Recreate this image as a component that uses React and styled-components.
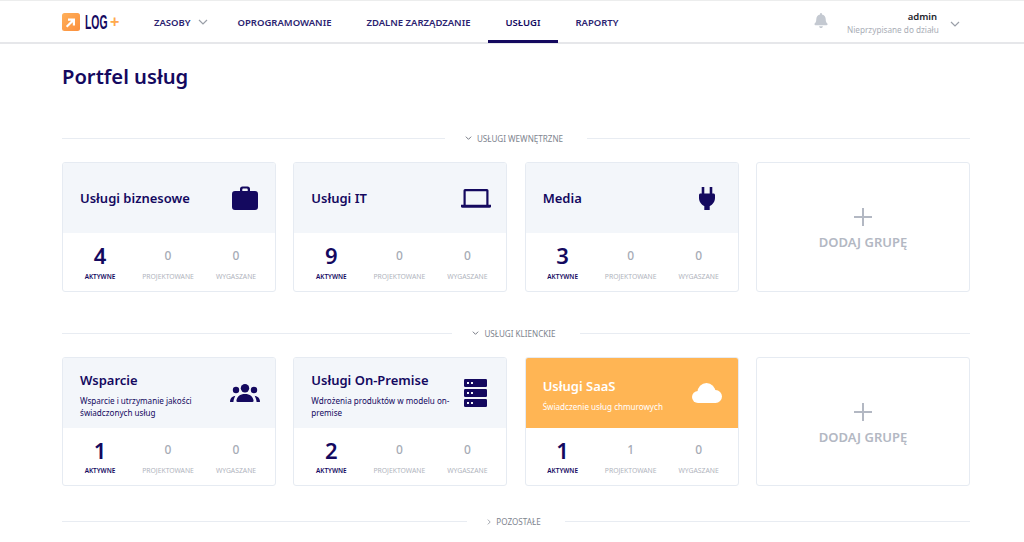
import React from "react";
import styled, { createGlobalStyle } from "styled-components";
import { FaBell } from "react-icons/fa";

const navy = "#14095f";
const font = `"Noto Sans", "Open Sans", "Liberation Sans", sans-serif`;

const Global = createGlobalStyle`
  html, body { margin: 0; padding: 0; background: #fff; height: 542px; overflow: hidden; }
  body { font-family: ${font}; color: ${navy}; }
  * { box-sizing: border-box; }
`;

const Header = styled.header`
  height: 44px;
  border-top: 1px solid #eceded;
  border-bottom: 2px solid #e6e7ea;
  display: flex;
  align-items: stretch;
  padding: 0 64px 0 62px;
`;
const Logo = styled.div`
  width: 92px;
  display: flex;
  align-items: center;
  flex: none;
`;
const LogoBadge = styled.svg`
  width: 18px;
  height: 18px;
  display: block;
  flex: none;
`;
const LogoText = styled.span`
  font-family: "Liberation Sans", sans-serif;
  font-weight: 700;
  font-size: 20px;
  line-height: 1;
  color: ${navy};
  display: inline-block;
  margin-left: 5px;
  width: 23px;
  transform: scaleX(0.52);
  transform-origin: left center;
  white-space: nowrap;
`;
const LogoPlus = styled.span`
  font-family: "Liberation Sans", sans-serif;
  font-weight: 700;
  font-size: 16px;
  line-height: 1;
  margin-left: 2px;
  color: #ffa94d;
`;
const Nav = styled.nav`
  display: flex;
  align-items: stretch;
  flex: 1;
`;
const NavItem = styled.a`
  display: flex;
  align-items: center;
  padding: 3px 17.5px 0;
  margin-bottom: -1px;
  font-size: 9.5px;
  font-weight: 600;
  color: ${p => (p.$active ? navy : "#2a2270")};
  border-bottom: 3px solid ${p => (p.$active ? navy : "transparent")};
  white-space: nowrap;
`;
const NavFirst = styled(NavItem)`
  padding-left: 0;
  padding-right: 29.5px;
  position: relative;
`;
const Chevron = styled.svg`
  width: ${p => p.$w || 10}px;
  height: ${p => p.$h || 6}px;
  flex: none;
  fill: none;
  stroke: ${p => p.$c || "#9a9fa8"};
  stroke-width: 1.2;
`;
const NavChevron = styled(Chevron)`
  position: absolute;
  right: 12px;
  top: 50%;
  margin-top: -2px;
`;
const UserArea = styled.div`
  display: flex;
  align-items: center;
  padding-top: 4px;
`;
const Bell = styled(FaBell)`
  width: 14px;
  height: 15px;
  color: #c4c9d1;
  margin: -6px 19px 0 0;
`;
const UserText = styled.div`
  width: 90px;
  text-align: right;
  margin-right: 13px;
`;
const UserName = styled.div`
  font-size: 9.5px;
  font-weight: 600;
  line-height: 12px;
  color: #1d1d2b;
`;
const UserDept = styled.div`
  font-size: 8.2px;
  line-height: 13px;
  color: #a9adb6;
  white-space: nowrap;
`;

const Main = styled.main`
  padding: 0 54px 0 62px;
`;
const Title = styled.h1`
  margin: 17px 0 0;
  font-size: 20.2px;
  line-height: 30px;
  font-weight: 600;
  color: ${navy};
`;
const SectionHead = styled.div`
  display: flex;
  align-items: center;
  height: 12px;
  margin: ${p => p.$top}px 0 ${p => p.$bottom}px;
  gap: 20px;
`;
const Line = styled.div`
  flex: 1;
  height: 1px;
  background: #e8ecf2;
`;
const SectionLabel = styled.div`
  display: flex;
  align-items: center;
  gap: 5px;
  padding-right: 4px;
  font-size: 8.1px;
  font-weight: 400;
  color: #80858f;
  white-space: nowrap;
`;
const Grid = styled.div`
  display: grid;
  grid-template-columns: repeat(4, 214px);
  column-gap: 17.33px;
`;
const Card = styled.div`
  height: 129.5px;
  border: 1px solid #e6ebf2;
  border-radius: 3px;
  overflow: hidden;
  background: #fff;
  display: flex;
  flex-direction: column;
`;
const CardHead = styled.div`
  height: 70px;
  flex: none;
  background: ${p => (p.$accent ? "#ffb554" : "#f3f6fa")};
  color: ${p => (p.$accent ? "#fff" : navy)};
  display: flex;
  align-items: center;
  padding: 0 15.5px 0 17px;
`;
const HeadText = styled.div`
  flex: 1;
  min-width: 0;
  padding-top: ${p => (p.$withSub ? 4 : 0)}px;
`;
const CardTitle = styled.div`
  font-size: 13px;
  font-weight: 600;
  line-height: 18px;
`;
const CardSub = styled.div`
  font-size: 8.1px;
  line-height: 12px;
  margin-top: 6px;
  max-width: 141px;
`;
const IconBox = styled.div`
  width: 30px;
  flex: none;
  display: flex;
  justify-content: center;
  align-items: center;
  color: ${p => (p.$accent ? "#fff" : navy)};
`;
const GlyphSvg = styled.svg`
  width: ${p => p.$w}px;
  height: ${p => p.$h}px;
  display: block;
  fill: currentColor;
`;
const Stats = styled.div`
  flex: 1;
  display: grid;
  grid-template-columns: repeat(3, 68px);
  padding: 7.5px 5px 0 3px;
`;
const Stat = styled.div`
  display: flex;
  flex-direction: column;
  align-items: center;
`;
const StatNum = styled.div`
  height: 29px;
  display: flex;
  align-items: center;
  font-size: ${p => (p.$main ? 22 : 12)}px;
  font-weight: ${p => (p.$main ? 600 : 500)};
  color: ${p => (p.$main ? navy : "#a6abb5")};
`;
const StatLabel = styled.div`
  font-size: ${p => (p.$main ? 6.4 : 6.8)}px;
  line-height: 10px;
  margin-top: 2px;
  font-weight: ${p => (p.$main ? 600 : 400)};
  color: ${p => (p.$main ? navy : "#b0b4bd")};
  white-space: nowrap;
`;
const AddCard = styled(Card)`
  align-items: center;
  justify-content: center;
  padding-top: 6px;
  color: #b3b8c3;
`;
const AddPlus = styled.svg`
  width: 18px;
  height: 18px;
  stroke: #b3b8c3;
  stroke-width: 2;
  display: block;
`;
const AddLabel = styled.div`
  font-size: 13px;
  font-weight: 600;
  line-height: 18px;
  margin-top: 7px;
`;

const ChevronDown = () => (
  <Chevron $w={7} $h={4} $c="#555a66" viewBox="0 0 10 6"><path d="M1 1l4 4 4-4" /></Chevron>
);

const Briefcase = () => (
  <GlyphSvg $w={26} $h={24} viewBox="0 0 26 24">
    <path fillRule="evenodd" d="M8 5V3a2.500 2.500 0 0 1 2.500-2.500h5A2.500 2.500 0 0 1 18 3v2h5a3 3 0 0 1 3 3v13a3 3 0 0 1-3 3H3a3 3 0 0 1-3-3V8a3 3 0 0 1 3-3zm2.300 0h5.400V3.400a.8.8 0 0 0-.8-.8h-3.800a.8.8 0 0 0-.8.8z" />
  </GlyphSvg>
);
const Laptop = () => (
  <GlyphSvg $w={30} $h={19} viewBox="0 0 30 19">
    <path d="M4 0h22a1.500 1.500 0 0 1 1.500 1.500V16H25.300V2.200H4.700V16H2.500V1.500A1.500 1.500 0 0 1 4 0z" />
    <path d="M0 15.700h30v1.500a1.500 1.500 0 0 1-1.500 1.500h-27A1.500 1.500 0 0 1 0 17.200z" />
  </GlyphSvg>
);
const Plug = () => (
  <GlyphSvg $w={16} $h={23} viewBox="0 0 16 23">
    <path d="M2.700 0h2.600v6.500h5.400V0h2.600v6.500h1.200c.8 0 1.500.7 1.500 1.500v3c0 3.500-2.200 6.600-5.300 8V23H5.300v-4C2.200 17.600 0 14.500 0 11V8c0-.8.7-1.500 1.500-1.500h1.200z" />
  </GlyphSvg>
);
const Server = () => (
  <GlyphSvg $w={23} $h={28} viewBox="0 0 23 28">
    {[0, 10, 20].map(y => (
      <g key={y}>
        <rect x="0" y={y} width="23" height="8" rx="1.200" />
        <rect x="3" y={y + 3} width="2" height="2" fill="#f3f6fa" />
        <rect x="7" y={y + 3} width="2" height="2" fill="#f3f6fa" />
      </g>
    ))}
  </GlyphSvg>
);
const People = () => (
  <GlyphSvg $w={30} $h={18} viewBox="0 0 30 18">
    <circle cx="15" cy="4.200" r="4.200" />
    <circle cx="6" cy="6" r="3.200" />
    <circle cx="24" cy="6" r="3.200" />
    <path d="M7.500 18c-.8 0-1.200-.5-1.100-1.200C7 12.500 10 10 15 10s8 2.500 8.600 6.800c.1.700-.3 1.200-1.100 1.200z" />
    <path d="M.8 18c-.6 0-.9-.4-.8-1 .5-2.700 2-4.600 5.300-5.200-.9 1.800-1.700 3.800-1.900 6.200z" />
    <path d="M29.200 18c.6 0 .9-.4.8-1-.5-2.700-2-4.600-5.300-5.200.9 1.800 1.700 3.800 1.900 6.200z" />
  </GlyphSvg>
);
const CloudIcon = () => (
  <GlyphSvg $w={30} $h={20} viewBox="0 0 30 20">
    <circle cx="6" cy="14" r="6" />
    <circle cx="14.500" cy="9" r="9" />
    <circle cx="23.500" cy="13.500" r="6.500" />
    <rect x="6" y="12" width="18" height="8" />
  </GlyphSvg>
);

const ServiceCard = ({ title, sub, icon, accent, stats }) => (
  <Card>
    <CardHead $accent={accent}>
      <HeadText $withSub={!!sub}>
        <CardTitle>{title}</CardTitle>
        {sub && <CardSub>{sub}</CardSub>}
      </HeadText>
      <IconBox $accent={accent}>{icon}</IconBox>
    </CardHead>
    <Stats>
      <Stat>
        <StatNum $main>{stats[0]}</StatNum>
        <StatLabel $main>AKTYWNE</StatLabel>
      </Stat>
      <Stat>
        <StatNum>{stats[1]}</StatNum>
        <StatLabel>PROJEKTOWANE</StatLabel>
      </Stat>
      <Stat>
        <StatNum>{stats[2]}</StatNum>
        <StatLabel>WYGASZANE</StatLabel>
      </Stat>
    </Stats>
  </Card>
);

const AddGroup = () => (
  <AddCard>
    <AddPlus viewBox="0 0 18 18"><path d="M9 0v18M0 9h18" /></AddPlus>
    <AddLabel>DODAJ GRUPĘ</AddLabel>
  </AddCard>
);

export default function App() {
  return (
    <>
      <Global />
      <Header>
        <Logo>
          <LogoBadge viewBox="0 0 18 18">
            <defs>
              <linearGradient id="lg" x1="0" y1="0" x2="1" y2="1">
                <stop offset="0" stopColor="#ffb05a" />
                <stop offset="1" stopColor="#fb8f3c" />
              </linearGradient>
            </defs>
            <rect width="18" height="18" rx="2.500" fill="url(#lg)" />
            <path d="M6 5.500h7v7h-2.200V9.200L5.400 14.500 3.900 13l5.300-5.300H6z" fill="#fff" />
          </LogoBadge>
          <LogoText>LOG</LogoText>
          <LogoPlus>+</LogoPlus>
        </Logo>
        <Nav>
          <NavFirst>
            ZASOBY
            <NavChevron viewBox="0 0 10 6"><path d="M1 1l4 4 4-4" /></NavChevron>
          </NavFirst>
          <NavItem>OPROGRAMOWANIE</NavItem>
          <NavItem>ZDALNE ZARZĄDZANIE</NavItem>
          <NavItem $active>USŁUGI</NavItem>
          <NavItem>RAPORTY</NavItem>
        </Nav>
        <UserArea>
          <Bell />
          <UserText>
            <UserName>admin</UserName>
            <UserDept>Nieprzypisane do działu</UserDept>
          </UserText>
          <Chevron viewBox="0 0 10 6"><path d="M1 1l4 4 4-4" /></Chevron>
        </UserArea>
      </Header>
      <Main>
        <Title>Portfel usług</Title>
        <SectionHead $top={41} $bottom={18}>
          <Line />
          <SectionLabel><ChevronDown />USŁUGI WEWNĘTRZNE</SectionLabel>
          <Line />
        </SectionHead>
        <Grid>
          <ServiceCard title="Usługi biznesowe" icon={<Briefcase />} stats={[4, 0, 0]} />
          <ServiceCard title="Usługi IT" icon={<Laptop />} stats={[9, 0, 0]} />
          <ServiceCard title="Media" icon={<Plug />} stats={[3, 0, 0]} />
          <AddGroup />
        </Grid>
        <SectionHead $top={35.5} $bottom={17.5}>
          <Line />
          <SectionLabel>
            <ChevronDown />USŁUGI KLIENCKIE
          </SectionLabel>
          <Line />
        </SectionHead>
        <Grid>
          <ServiceCard title="Wsparcie" sub="Wsparcie i utrzymanie jakości świadczonych usług" icon={<People />} stats={[1, 0, 0]} />
          <ServiceCard title="Usługi On-Premise" sub="Wdrożenia produktów w modelu on-premise" icon={<Server />} stats={[2, 0, 0]} />
          <ServiceCard accent title="Usługi SaaS" sub="Świadczenie usług chmurowych" icon={<CloudIcon />} stats={[1, 1, 0]} />
          <AddGroup />
        </Grid>
        <SectionHead $top={29.5} $bottom={0}>
          <Line />
          <SectionLabel>
            <Chevron $w={4} $h={6} $c="#80858f" viewBox="0 0 6 10"><path d="M1 1l4 4-4 4" /></Chevron>
            POZOSTAŁE
          </SectionLabel>
          <Line />
        </SectionHead>
      </Main>
    </>
  );
}
